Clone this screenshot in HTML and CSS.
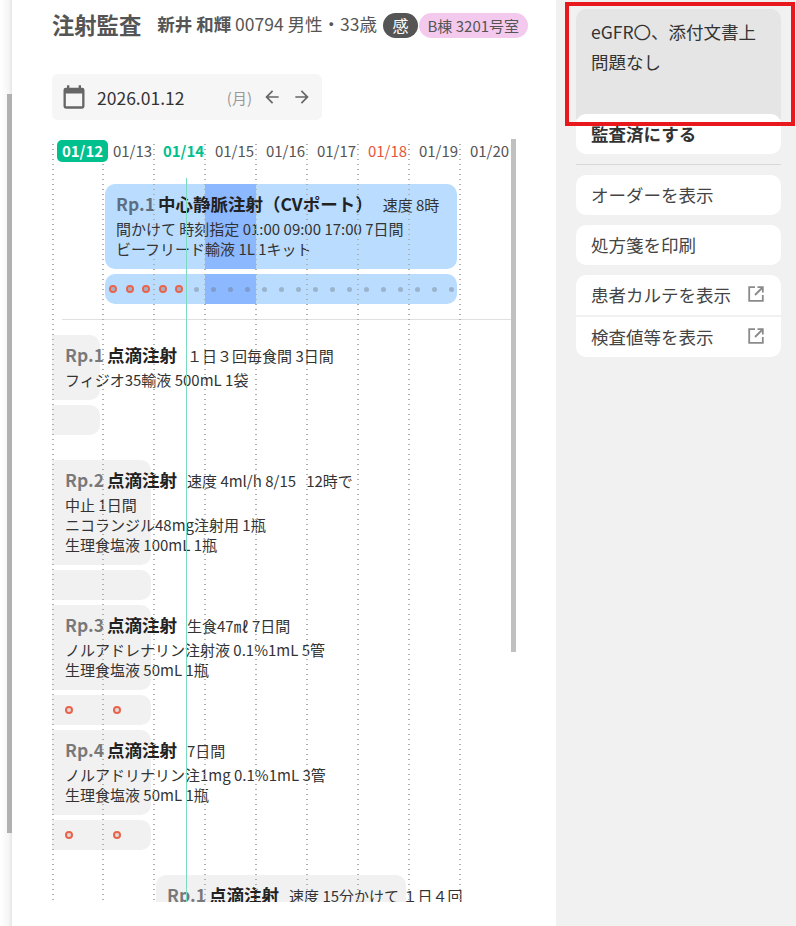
FILE: index.html
```html
<!DOCTYPE html>
<html lang="ja">
<head>
<meta charset="utf-8">
<title>注射監査</title>
<link rel="stylesheet" href="styles.css">
</head>
<body>
<div class="page">
  <div class="edge"><div class="edge-bar"></div></div>
  <main class="main">
    <header class="head">
      <h1 class="title">注射監査</h1>
      <div class="patient"><b>新井 和輝</b> 00794 男性・33歳</div>
      <span class="badge-dark">感</span>
      <span class="badge-pink">B棟 3201号室</span>
    </header>
    <div class="date-box">
      <svg class="cal" viewBox="0 0 24 24" width="28" height="28"><path fill="#666" d="M19 4h-1V2h-2v2H8V2H6v2H5a2 2 0 0 0-2 2v14a2 2 0 0 0 2 2h14a2 2 0 0 0 2-2V6a2 2 0 0 0-2-2zm0 16H5V9h14v11z"/></svg>
      <span class="date">2026.01.12</span>
      <span class="dow">(月)</span>
      <svg class="arrow" viewBox="0 0 24 24" width="20" height="20"><path fill="#666" d="M20 11H7.8l5.6-5.6L12 4l-8 8 8 8 1.4-1.4L7.8 13H20z"/></svg>
      <svg class="arrow" viewBox="0 0 24 24" width="20" height="20"><path fill="#666" d="M4 11h12.2l-5.6-5.6L12 4l8 8-8 8-1.4-1.4 5.6-5.6H4z"/></svg>
    </div>
    <div class="timeline">
      <div class="grid-lines">
        <i class="gl first"></i><i class="gl"></i><i class="gl"></i><i class="gl"></i><i class="gl"></i><i class="gl"></i><i class="gl"></i><i class="gl"></i><i class="gl"></i>
      </div>
      <div class="now-line"></div>
      <div class="v-scroll"></div>
      <div class="days">
        <span class="day sel">01/12</span>
        <span class="day">01/13</span>
        <span class="day today">01/14</span>
        <span class="day">01/15</span>
        <span class="day">01/16</span>
        <span class="day">01/17</span>
        <span class="day sun">01/18</span>
        <span class="day">01/19</span>
        <span class="day">01/20</span>
      </div>
      <section class="rx rx-main">
        <div class="card blue w-main">
          <div class="hl"></div>
          <div class="rx-head"><span class="rp">Rp.1</span><b class="name">中心静脈注射（CVポート）</b><span class="note">速度 8時</span></div>
          <div class="line">間かけて 時刻指定 01:00 09:00 17:00 7日間</div>
          <div class="line">ビーフリード輸液 1L 1キット</div>
        </div>
        <div class="track blue w-main">
          <div class="hl"></div>
          <i class="o"></i><i class="o"></i><i class="o"></i><i class="o"></i><i class="o"></i>
          <i class="p"></i><i class="p"></i><i class="p"></i><i class="p"></i><i class="p"></i><i class="p"></i><i class="p"></i><i class="p"></i><i class="p"></i><i class="p"></i><i class="p"></i><i class="p"></i><i class="p"></i><i class="p"></i><i class="p"></i><i class="p"></i>
        </div>
      </section>
      <hr class="sep">
      <section class="rx r1">
        <div class="card gray w1 left">
          <div class="rx-head nowrap"><span class="rp">Rp.1</span><b class="name">点滴注射</b><span class="note">１日３回毎食間 3日間</span></div>
          <div class="line nowrap">フィジオ35輸液 500mL 1袋</div>
        </div>
        <div class="track gray w1 left"></div>
      </section>
      <section class="rx r2">
        <div class="card gray w2 left">
          <div class="rx-head nowrap"><span class="rp">Rp.2</span><b class="name">点滴注射</b><span class="note">速度 4ml/h 8/15 &nbsp; 12時で</span></div>
          <div class="line nowrap">中止 1日間</div>
          <div class="line nowrap">ニコランジル48mg注射用 1瓶</div>
          <div class="line nowrap">生理食塩液 100mL 1瓶</div>
        </div>
        <div class="track gray w2 left"></div>
      </section>
      <section class="rx r3">
        <div class="card gray w2 left">
          <div class="rx-head nowrap"><span class="rp">Rp.3</span><b class="name">点滴注射</b><span class="note">生食47㎖ 7日間</span></div>
          <div class="line nowrap">ノルアドレナリン注射液 0.1%1mL 5管</div>
          <div class="line nowrap">生理食塩液 50mL 1瓶</div>
        </div>
        <div class="track gray w2 left"><i class="r"></i><i class="r"></i></div>
      </section>
      <section class="rx r3">
        <div class="card gray w2 left">
          <div class="rx-head nowrap"><span class="rp">Rp.4</span><b class="name">点滴注射</b><span class="note">7日間</span></div>
          <div class="line nowrap">ノルアドリナリン注1mg 0.1%1mL 3管</div>
          <div class="line nowrap">生理食塩液 50mL 1瓶</div>
        </div>
        <div class="track gray w2 left"><i class="r"></i><i class="r"></i></div>
      </section>
      <section class="rx r2">
        <div class="card gray w5">
          <div class="rx-head nowrap"><span class="rp">Rp.1</span><b class="name">点滴注射</b><span class="note">速度 15分かけて １日４回</span></div>
        </div>
      </section>
    </div>
  </main>
  <aside class="side">
    <div class="memo">eGFR〇、添付文書上<br>問題なし</div>
    <button class="btn strong">監査済にする</button>
    <hr class="side-sep">
    <button class="btn">オーダーを表示</button>
    <button class="btn">処方箋を印刷</button>
    <div class="btn-group">
      <button class="btn ext">患者カルテを表示
        <svg viewBox="0 0 18 18" width="18" height="18"><path fill="none" stroke="#8a8a8a" stroke-width="1.8" d="M8 2.2H2.2v13.6h13.6V10M10.5 2.2h5.3v5.3M15.5 2.5l-7.5 7.5"/></svg>
      </button>
      <button class="btn ext">検査値等を表示
        <svg viewBox="0 0 18 18" width="18" height="18"><path fill="none" stroke="#8a8a8a" stroke-width="1.8" d="M8 2.2H2.2v13.6h13.6V10M10.5 2.2h5.3v5.3M15.5 2.5l-7.5 7.5"/></svg>
      </button>
    </div>
    <div class="redbox"></div>
  </aside>
</div>
</body>
</html>
```
FILE: styles.css
```css
* { box-sizing: border-box; }
html, body { margin: 0; padding: 0; }
body { font-family: "Noto Sans CJK JP", "Noto Sans", sans-serif; color: #333; background: #fff; }
.page { position: relative; display: flex; width: 796px; height: 926px; overflow: hidden; }
.edge { position: relative; width: 12px; flex: none; background: linear-gradient(to right, #fff, #f6f6f6 70%, #e6e6e6); }
.edge-bar { position: absolute; left: 7px; top: 94px; width: 5px; height: 739px; background: #b0b0b0; }
.main { width: 544px; flex: none; padding: 0 0 0 40px; background: #fff; }
.head { display: flex; align-items: center; height: 26px; margin-top: 12px; white-space: nowrap; }
.title { margin: -2px 16px 0 0; font-size: 22.3px; font-weight: 700; color: #555; line-height: 26px; }
.patient { margin: -2px 6px 0 0; font-size: 17.5px; color: #555; line-height: 26px; }
.patient b { font-weight: 700; }
.badge-dark { width: 35px; height: 25px; border-radius: 13px; background: #555; color: #fff; font-size: 16px; line-height: 25px; text-align: center; margin-right: 1px; }
.badge-pink { height: 25px; padding: 0 8.5px; border-radius: 13px; background: #f4c9ee; color: #555; font-size: 15px; line-height: 25px; }
.date-box { display: flex; align-items: center; width: 270px; height: 46px; margin-top: 36px; background: #f6f6f6; border-radius: 6px; padding: 0 10px 0 8px; }
.cal { flex: none; margin-right: 9px; }
.date { font-size: 17.5px; color: #333; flex: 1; }
.dow { font-size: 15px; color: #999; }
.arrow { flex: none; margin-left: 10px; }
.timeline { position: relative; width: 464px; height: 763px; margin-top: 19px; overflow: hidden; }
.grid-lines { position: absolute; left: 0; top: 5px; right: 0; bottom: 1px; z-index: 2; display: flex; pointer-events: none; }
.gl { flex: none; width: 51px; background: linear-gradient(to bottom, #b0b0b0 0 1px, transparent 1px) 0 0 / 2px 5px repeat-y; }
.gl.first { width: 50px; }
.now-line { position: absolute; left: 134px; top: 39px; bottom: 0; width: 1px; background: #79dcc0; z-index: 3; }
.v-scroll { position: absolute; right: 0; top: 0; width: 5px; height: 513px; background: #c0c0c0; z-index: 4; }
.days { position: relative; z-index: 3; display: flex; padding: 1px 0 0 5px; height: 45px; font-size: 15px; line-height: 22px; color: #555; }
.day { width: 51px; text-align: center; flex: none; }
.day.sel { background: #00c08d; color: #fff; font-weight: 700; border-radius: 5px; height: 22px; margin-right: -1px; }
.day.today { color: #00c08d; font-weight: 700; }
.day.sun { color: #e8553a; }
.rx { position: relative; }
.card { border-radius: 10px; padding: 8px 11px 10px; position: relative; overflow: hidden; }
.blue { background: #b9dcff; }
.gray { background: #f1f1f1; }
.w-main { margin-left: 53px; width: 352px; }
.w1 { width: 48px; overflow: visible; }
.w2 { width: 99px; overflow: visible; }
.w5 { margin-left: 104px; width: 250px; overflow: visible; height: 120px; }
.left { border-radius: 0 10px 10px 0; padding-left: 13px; }
.rx-head { position: relative; font-size: 15px; line-height: 23px; height: 27px; white-space: nowrap; }
.rp { font-size: 17.5px; font-weight: 700; color: rgba(0, 0, 0, .5); margin-right: 3px; }
.name { font-size: 17.5px; font-weight: 700; color: #222; }
.note { font-size: 15px; color: #333; margin-left: 10px; }
.line { font-size: 15px; line-height: 20px; color: #333; position: relative; }
.nowrap { white-space: nowrap; }
.track { height: 30px; margin-top: 5px; border-radius: 10px; display: flex; align-items: center; position: relative; overflow: hidden; }
.track.left { border-radius: 0 10px 10px 0; padding-left: 13px; }
.rx-main .track { padding-left: 4px; }
.hl { position: absolute; left: 100px; top: 0; bottom: 0; width: 51px; background: #8cb8ff; }
.o { position: relative; width: 8px; height: 8px; border: 2px solid #ea6248; background: rgba(102, 102, 108, .35) padding-box; border-radius: 50%; margin-right: 8.5px; flex: none; }
.p { position: relative; width: 5px; height: 5px; background: rgba(102, 102, 108, .35); border-radius: 50%; margin-right: 12px; flex: none; }
.o + .p { margin-left: 2.3px; }
.r { width: 8px; height: 8px; background: #dcdcdc padding-box; border: 2px solid #ea6248; border-radius: 50%; margin-right: 40px; flex: none; }
.sep { margin: 15px 0 0 10px; border: 0; border-top: 1px solid #e0e0e0; }
.r1 { margin-top: 15px; }
.r2 { margin-top: 25px; }
.r3 { margin-top: 5px; }
.side { position: relative; flex: 1; background: #f1f1f1; padding: 9px 15px 0 20px; }
.memo { height: 110px; padding: 8px 15px; background: #e5e5e5; border-radius: 10px 10px 0 0; font-size: 17.5px; line-height: 30px; color: #333; }
.btn { display: flex; align-items: center; justify-content: space-between; width: 100%; height: 40px; border: 0; background: #fff; border-radius: 10px; padding: 0 16px 2px 15px; font: inherit; font-size: 17.5px; color: #444; margin: 0 0 10px; text-align: left; }
.strong { margin-top: -5px; font-weight: 700; color: #333; }
.side-sep { border: 0; border-top: 1px solid #d8d8d8; margin: 0 0 10px; }
.btn-group { display: flex; flex-direction: column; gap: 2px; background: #f1f1f1; border-radius: 10px; overflow: hidden; }
.btn-group .btn { margin: 0; border-radius: 0; }
.redbox { position: absolute; left: 9px; top: 2px; width: 230px; height: 124px; border: 4px solid #e8181c; }
```
